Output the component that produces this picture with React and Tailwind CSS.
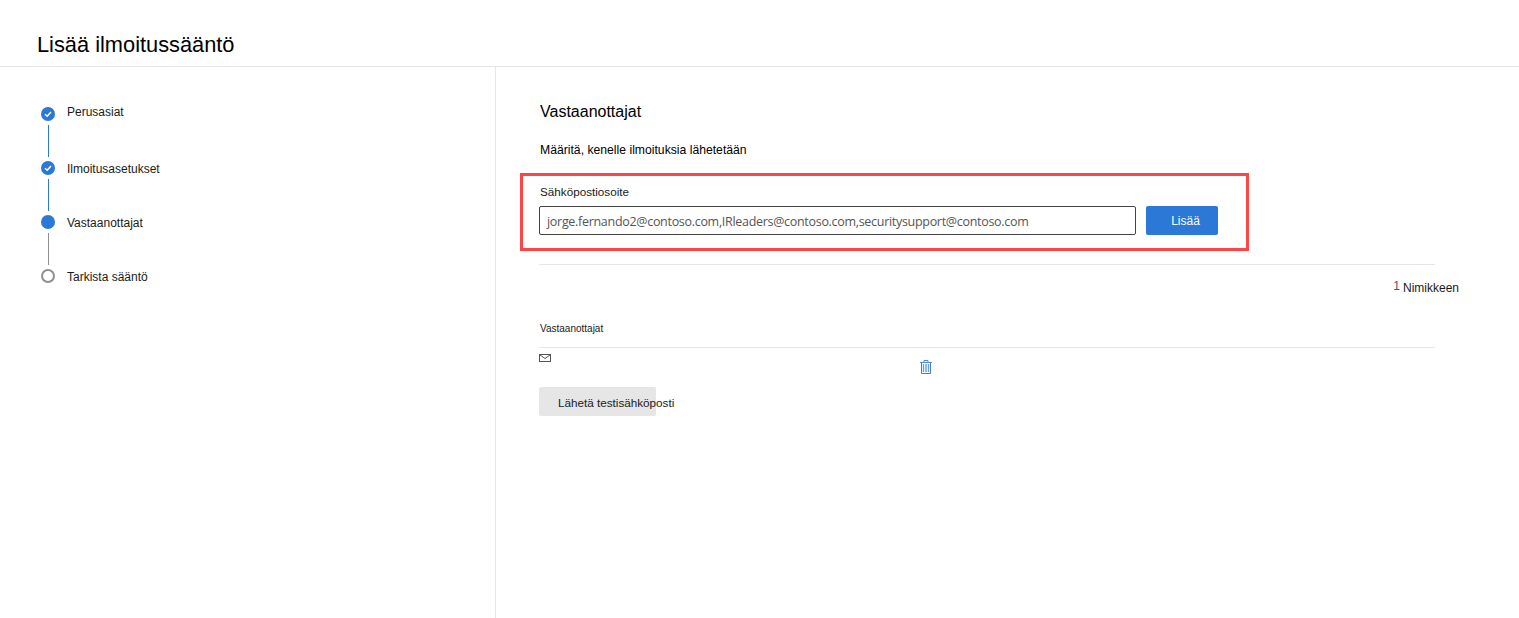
// App.jsx
import React from 'react';

const steps = [
  { label: 'Perusasiat', state: 'done', line: 'bg-[#2b78d6]', labelClass: '-mt-[2px]' },
  { label: 'Ilmoitusasetukset', state: 'done', line: 'bg-[#2b78d6]', labelClass: 'mt-px' },
  { label: 'Vastaanottajat', state: 'current', line: 'bg-[#8f8f8f]', labelClass: 'mt-px' },
  { label: 'Tarkista sääntö', state: 'todo', line: null, labelClass: 'mt-px' },
];

function StepDot({ state }) {
  if (state === 'todo') {
    return <div className="w-[14px] h-[14px] rounded-full border-2 border-[#8f8f8f] bg-white" />;
  }
  return (
    <div className="w-[14px] h-[14px] rounded-full bg-[#2b78d6] flex items-center justify-center">
      {state === 'done' && (
        <svg width="10" height="10" viewBox="0 0 10 10" fill="none">
          <path d="M2 5.2 L4.2 7.2 L8 3" stroke="white" strokeWidth="1.5" />
        </svg>
      )}
    </div>
  );
}

function Stepper() {
  return (
    <div className="pt-10 pl-[41px]">
      {steps.map((step) => (
        <div key={step.label} className="flex gap-3">
          <div className="flex flex-col items-center w-[14px]">
            <StepDot state={step.state} />
            {step.line && <div className={`w-px h-8 my-1 ${step.line}`} />}
          </div>
          <div className={`text-[12px] leading-[14px] text-[#1b1a19] ${step.labelClass}`}>{step.label}</div>
        </div>
      ))}
    </div>
  );
}

function MailIcon() {
  return (
    <svg width="12" height="9" viewBox="0 0 12 9" fill="none" className="block">
      <rect x="0.5" y="0.5" width="11" height="7" stroke="#555" />
      <path d="M1 1 L6 4.5 L11 1" stroke="#555" />
    </svg>
  );
}

function TrashIcon() {
  return (
    <svg width="12" height="14" viewBox="0 0 12 14" fill="none" className="block">
      <path d="M0 2.5 H12 M4 2.5 V0.5 H8 V2.5" stroke="#4f8bd6" />
      <path d="M1.5 2.5 V13.5 H10.5 V2.5" stroke="#3f80d2" />
      <path d="M3.5 4 V12 M6 4 V12 M8.5 4 V12" stroke="#6a9fe0" strokeWidth="1.4" />
    </svg>
  );
}

export default function App() {
  return (
    <div className="h-[618px] w-[1519px] overflow-hidden bg-white flex flex-col font-['Liberation_Sans',sans-serif] text-[#1b1a19]">
      <header className="h-[67px] shrink-0 border-b border-[#e6e6e6] pl-[37px] pt-[32px]">
        <h1 className="text-[21.8px] leading-[26px] text-black">Lisää ilmoitussääntö</h1>
      </header>

      <div className="flex flex-1">
        <aside className="w-[496px] shrink-0 border-r border-[#e6e6e6]">
          <Stepper />
        </aside>

        <main className="flex-1 pl-[43px] pr-[84px] pt-[35px]">
          <h2 className="ml-px text-[16px] leading-[20px] text-black">Vastaanottajat</h2>
          <p className="ml-px text-[12.2px] leading-[14px] mt-[21px] text-black">Määritä, kenelle ilmoituksia lähetetään</p>

          <div className="mt-[16px] -ml-[19px] w-[729px] h-[78px] border-[3px] border-[#ff4545] pl-[16px] pt-[9px]">
            <label className="block ml-px text-[11.7px] leading-[14px]">Sähköpostiosoite</label>
            <div className="flex gap-[10px] mt-[7px]">
              <div className="w-[597px] h-[29px] border border-[#444] rounded-[2px] flex items-center pl-[7px] pt-[3px] text-[12.5px] text-[#555] font-['Open_Sans',sans-serif] tracking-[-0.3px] whitespace-nowrap">
                jorge.fernando2@contoso.com,IRleaders@contoso.com,securitysupport@contoso.com
              </div>
              <button className="w-[72px] h-[29px] rounded-[2px] bg-[#2b78d6] text-white text-[12px] pl-[7px]">Lisää</button>
            </div>
          </div>

          <div className="mt-[13px] border-t border-[#e6e6e6]" />

          <div className="flex justify-end items-start -mr-[24px] mt-[15px] h-[16px] text-[12px] leading-[16px]">
            <span className="text-[#555] mr-[3px] -mt-[2px]">1</span>
            <span>Nimikkeen</span>
          </div>

          <div className="ml-px text-[10px] leading-[12px] mt-[27px]">Vastaanottajat</div>
          <div className="mt-[12px] border-t border-[#e6e6e6]" />

          <div className="relative h-[39px]">
            <div className="pt-[6px]">
              <MailIcon />
            </div>
            <div className="absolute left-[381px] top-[12px]">
              <TrashIcon />
            </div>
          </div>

          <button className="block w-[117px] h-[29px] rounded-[2px] bg-[#e6e6e6] text-left pl-[19px] pt-[3px] text-[11.7px] whitespace-nowrap">
            Lähetä testisähköposti
          </button>
        </main>
      </div>
    </div>
  );
}
